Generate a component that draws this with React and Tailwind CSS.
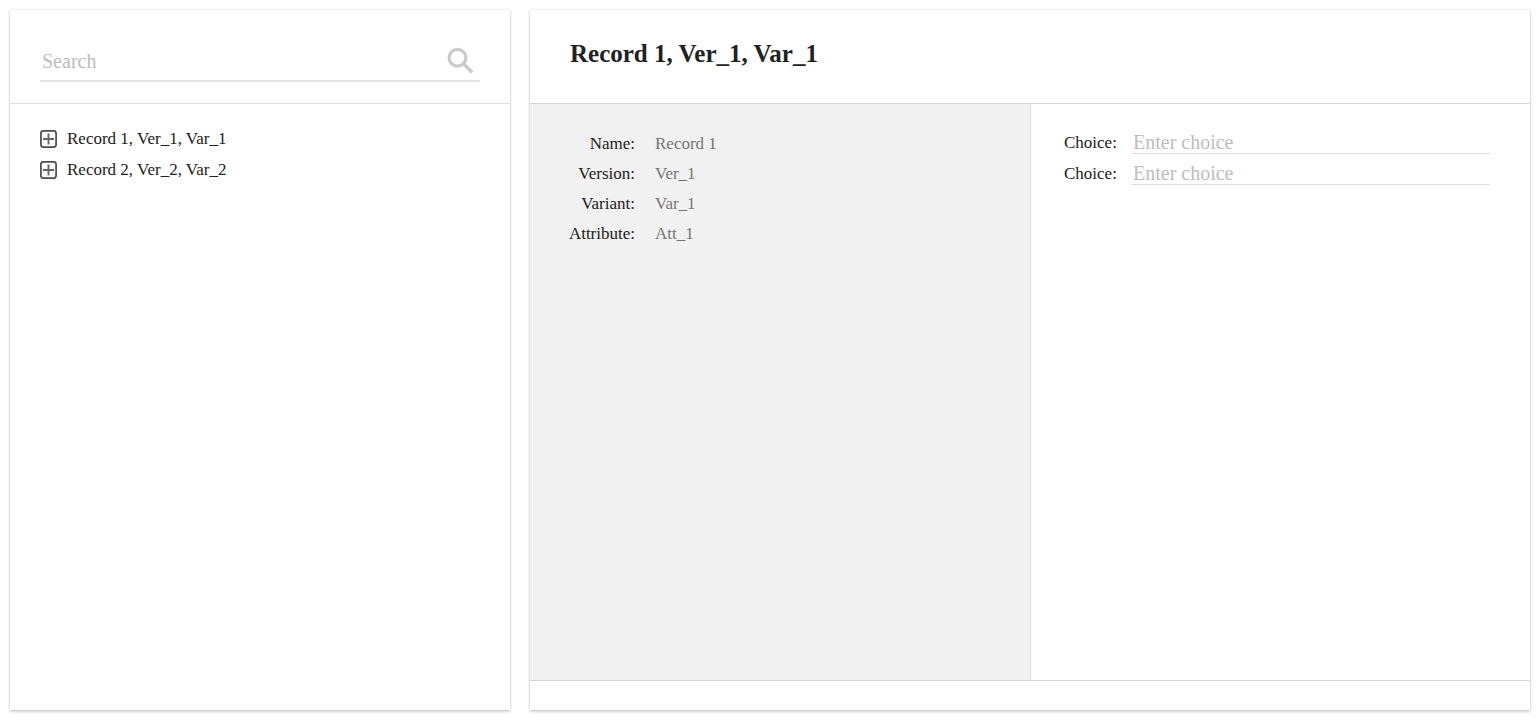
const records = [
  { name: 'Record 1', version: 'Ver_1', variant: 'Var_1', attribute: 'Att_1' },
  { name: 'Record 2', version: 'Ver_2', variant: 'Var_2', attribute: 'Att_2' },
];

const titleOf = (r) => `${r.name}, ${r.version}, ${r.variant}`;

const panel = 'flex flex-col bg-white shadow-[0_2px_3px_rgba(0,0,0,0.16),0_0_2px_rgba(0,0,0,0.18)]';

function SearchIcon() {
  return (
    <svg viewBox="0 0 36 36" className="size-9" fill="none" stroke="#cacaca" aria-hidden="true">
      <circle cx="13.5" cy="14.8" r="8.4" strokeWidth="3.2" />
      <path d="M19.2 20.4 28.2 29.4" strokeWidth="3.6" />
    </svg>
  );
}

function ExpandIcon() {
  return (
    <svg viewBox="0 0 17 18" className="h-[18px] w-[17px]" fill="none" aria-hidden="true">
      <rect x="0.9" y="0.9" width="15.2" height="16.2" rx="2.5" stroke="#4c4c4c" strokeWidth="1.7" />
      <path d="M8.5 3.5v11M3 9h11" stroke="#666" strokeWidth="1.9" />
    </svg>
  );
}

function Field({ label, value }) {
  return (
    <div className="flex gap-5">
      <dt className="w-[75px] text-right">{label}:</dt>
      <dd className="text-[#757575]">{value}</dd>
    </div>
  );
}

function Choice({ id }) {
  return (
    <div className="flex items-center gap-3">
      <label htmlFor={id} className="w-[55px]">Choice:</label>
      <input
        id={id}
        placeholder="Enter choice"
        className="h-[23px] min-w-0 flex-1 border-b border-[#dedede] px-0.5 text-[20px] leading-[22px] outline-none placeholder:text-[#bdbdbd]"
      />
    </div>
  );
}

export default function App() {
  const current = records[0];
  return (
    <div className="flex min-h-screen gap-5 bg-white px-2.5 pt-2.5 pb-3 font-['Liberation_Serif',serif] text-[17px] leading-5 text-[#212121]">
      <aside className={`${panel} min-w-0 flex-1`}>
        <div className="h-[94px] border-b border-[#dedede] px-[30px] pt-8">
          <div className="flex h-10 items-center border-b-2 border-[#e3e3e3]">
            <input
              aria-label="Search"
              placeholder="Search"
              className="min-w-0 flex-1 px-0.5 text-[20px] leading-6 outline-none placeholder:text-[#bdbdbd]"
            />
            <button type="button" aria-label="Run search">
              <SearchIcon />
            </button>
          </div>
        </div>
        <ul className="flex flex-col gap-[11px] px-[30px] pt-[25px]">
          {records.map((r) => (
            <li key={r.name} className="flex items-center gap-2.5">
              <button type="button" aria-label={`Expand ${r.name}`}>
                <ExpandIcon />
              </button>
              <a href="#record">{titleOf(r)}</a>
            </li>
          ))}
        </ul>
      </aside>

      <main className={`${panel} min-w-0 flex-2`}>
        <header className="h-[94px] border-b border-[#d6d6d6] px-10 pt-[30px]">
          <h1 className="text-[25px] leading-7 font-bold">{titleOf(current)}</h1>
        </header>
        <div className="grid flex-1 grid-cols-2">
          <dl className="flex flex-col gap-2.5 bg-[#f1f1f1] px-[30px] pt-[30px]">
            <Field label="Name" value={current.name} />
            <Field label="Version" value={current.version} />
            <Field label="Variant" value={current.variant} />
            <Field label="Attribute" value={current.attribute} />
          </dl>
          <form className="flex flex-col gap-2 border-l border-[#dedede] pt-[27px] pr-10 pl-[33px]">
            <Choice id="choice-1" />
            <Choice id="choice-2" />
          </form>
        </div>
        <footer className="h-[30px] border-t border-[#d6d6d6]" />
      </main>
    </div>
  );
}
